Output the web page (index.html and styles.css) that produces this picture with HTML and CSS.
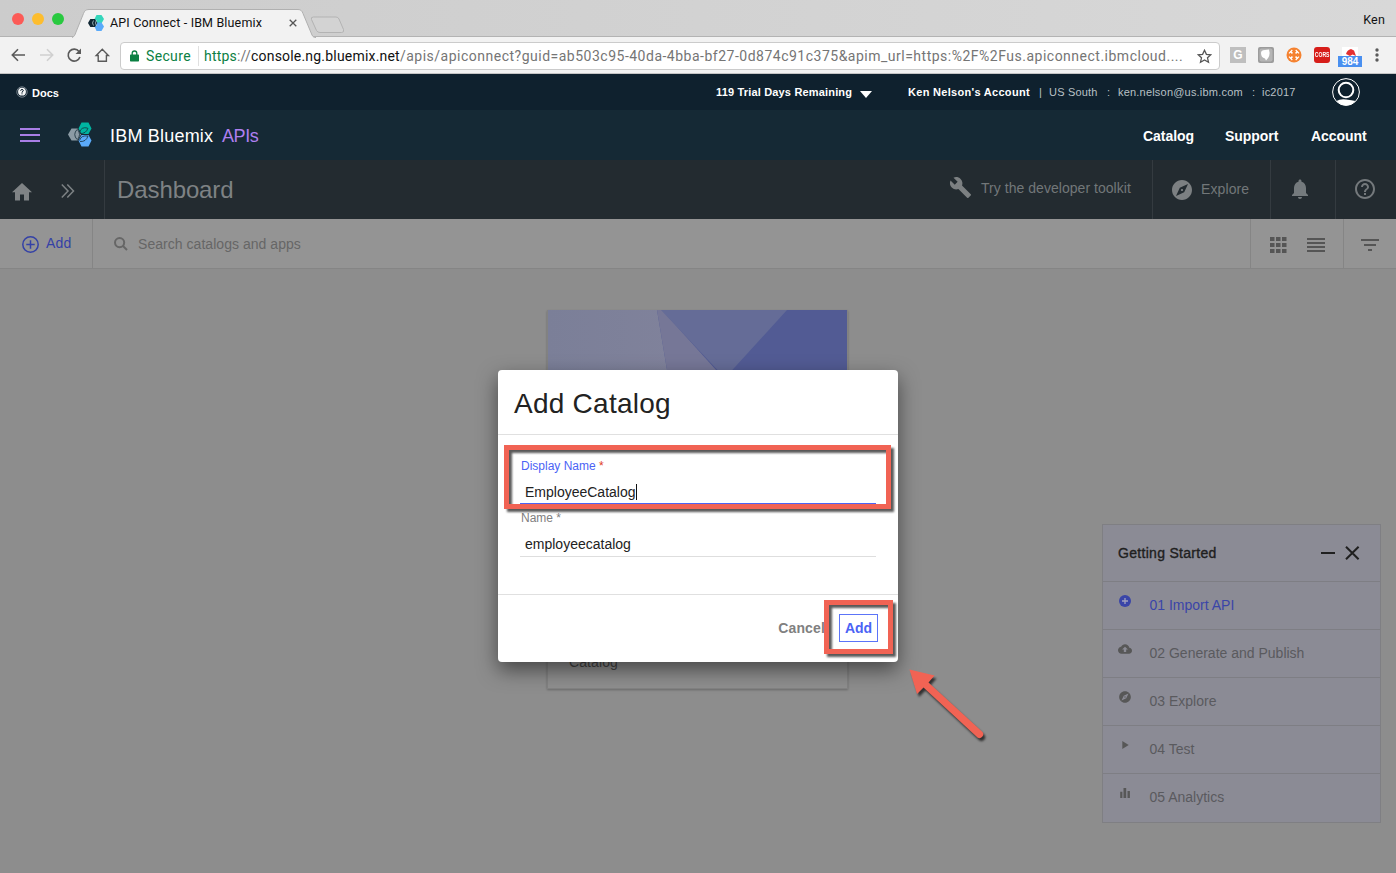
FILE: index.html
```html
<!DOCTYPE html>
<html lang="en">
<head>
<meta charset="utf-8">
<title>API Connect - IBM Bluemix</title>
<link rel="stylesheet" href="styles.css">
</head>
<body>
<svg class="defs" width="0" height="0">
  <symbol id="compass" viewBox="0 0 24 24"><path d="M12 10.9c-.61 0-1.1.49-1.1 1.1s.49 1.1 1.1 1.1c.61 0 1.1-.49 1.1-1.1s-.49-1.1-1.1-1.1zM12 2C6.48 2 2 6.48 2 12s4.48 10 10 10 10-4.48 10-10S17.52 2 12 2zm2.19 12.19L6 18l3.81-8.19L18 6l-3.81 8.190z"/></symbol>
</svg>
<div class="tabstrip">
  <div class="lights"><i class="red"></i><i class="amber"></i><i class="green"></i></div>
  <div class="tab">
    <svg class="tab-shape" width="280" height="29" viewBox="0 0 280 29"><path d="M0 28.500C2 28 3 26 4 23L11.500 4.500C12.500 2 13.500 .5 17 .5H226C229 .5 230 2 231 4.500L240 26C241 28 242 28.500 244 28.500V29H0Z" fill="#f2f2f2"/><path d="M0 28.500C2 28 3 26 4 23L11.500 4.500C12.500 2 13.500 .5 17 .5H226C229 .5 230 2 231 4.500L240 26C241 28 242 28.500 244 28.500" fill="none" stroke="#b0b0b0"/><path d="M241.500 8H264Q266 8 267 10L271.500 20.500Q272.500 23.500 269.500 23.500H248Q245.500 23.500 244.500 21.500L239.500 10.500Q238.500 8 241.500 8Z" fill="#d3d3d3" stroke="#b3b3b3"/></svg>
    <svg class="favicon" width="16" height="16" viewBox="0 0 16 16"><path d="M8.500 0H13.500L16 4 13.500 8.500H8.500L6.500 4Z" fill="#35d6bb"/><path d="M8.500 7.500H13.500L16 11.500 13.500 16H8.500L6.500 11.500Z" fill="#5aaafa"/><path d="M2.300 4H7L9.300 8 7 12H2.300L0 8Z" fill="#112734"/><path d="M5.500 5.500Q3.500 8 5.500 10.500M8.500 5Q6.500 8 8.500 11" stroke="#b5cad1" stroke-width=".8" fill="none"/></svg>
    <span class="tab-title">API Connect - IBM Bluemix</span>
    <svg class="tab-close" width="8" height="8" viewBox="0 0 8 8"><path d="M.7.700 7.300 7.300M7.300.700.7 7.300" stroke="#555" stroke-width="1.300"/></svg>
  </div>
  <span class="profile">Ken</span>
</div>
<div class="navbar">
  <svg class="nav-icons" width="112" height="36" viewBox="0 0 112 36" fill="none" stroke="#5a5a5a" stroke-width="1.600"><path d="M25 18H12.500M18 12.300 12.300 18 18 23.700"/><path d="M40 18H52.500M47 12.300 52.700 18 47 23.700" stroke="#d0d0d0"/><path d="M79 14.500A6 6 0 1 0 79.900 20"/><path d="M81 11.500V17H75.500Z" fill="#5a5a5a" stroke="none"/><path d="M98.200 24.200V18.500H96.200L102.300 12.300 108.400 18.500H106.400V24.200Z" stroke-width="1.400"/></svg>
  <div class="address">
    <svg class="lock" width="9" height="12" viewBox="0 0 9 12"><rect y="4.500" width="9" height="7" rx=".7" fill="#0b8043"/><path d="M2.200 5V3.300a2.300 2.300 0 0 1 4.600 0V5" fill="none" stroke="#0b8043" stroke-width="1.300"/></svg>
    <span class="secure">Secure</span>
    <span class="url"><b class="scheme">https</b>://<b class="host">console.ng.bluemix.net</b><b class="path">/apis/apiconnect?guid=ab503c95-40da-4bba-bf27-0d874c91c375&amp;apim_url=https:%2F%2Fus.apiconnect.ibmcloud....</b></span>
    <svg class="star" width="15" height="15" viewBox="0 0 15 15"><path d="M7.500 1.300 9.400 5.300 13.800 5.800 10.500 8.800 11.500 13.200 7.500 10.900 3.500 13.200 4.500 8.800 1.200 5.800 5.600 5.300Z" fill="none" stroke="#555" stroke-width="1.300"/></svg>
  </div>
  <div class="exts">
    <span class="ext ext-g">G</span>
    <svg class="ext" width="16" height="16" viewBox="0 0 16 16"><rect width="16" height="16" rx="2" fill="#9c9c9c"/><rect x="1.500" y="1.500" width="13" height="13" rx="2" fill="#b5b5b5"/><path d="M3 6Q3 3 7 3L11 2.500Q13 9 8 13.500L7 11.500Q3 10.500 3 6Z" fill="#fff"/></svg>
    <svg class="ext" width="16" height="16" viewBox="0 0 16 16"><circle cx="8" cy="8" r="7.500" fill="#f58230"/><path d="M4.500 4.500 11.500 11.500M11.500 4.500 4.500 11.500" stroke="#fff" stroke-width="1.700"/><path d="M3 6.300 6.300 3M9.700 3 13 6.300M3 9.700 6.300 13M9.700 13 13 9.700" stroke="#fff" stroke-width="1.200"/><circle cx="8" cy="8" r="2.200" fill="#f58230"/></svg>
    <span class="ext ext-cors"><em>CORS</em></span>
    <span class="ext ext-last"><svg width="16" height="16" viewBox="0 0 16 16"><rect width="16" height="16" fill="#fff"/><path d="M4 7Q5 3 9 2L12 3.500 14 9 10.500 7.500 8 9Z" fill="#e53030"/></svg><span class="count">984</span></span>
    <svg class="dots" width="4" height="16" viewBox="0 0 4 16" fill="#5a5a5a"><circle cx="2" cy="3" r="1.700"/><circle cx="2" cy="8" r="1.700"/><circle cx="2" cy="13" r="1.700"/></svg>
  </div>
</div>
<div class="acctbar">
  <svg class="docs-icon" width="12" height="12" viewBox="0 0 12 12"><circle cx="6" cy="6" r="5.200" fill="none" stroke="#8b969e" stroke-width=".8"/><circle cx="6" cy="5.700" r="3.900" fill="#f3f5f6"/><path d="M4.600 4.700Q4.700 3.500 6 3.500T7.400 4.700Q7.300 5.300 6 6V6.700M6 7.300V8.300" stroke="#0f212e" fill="none"/></svg>
  <strong class="docs">Docs</strong>
  <strong class="trial">119 Trial Days Remaining</strong>
  <svg class="caret" width="12" height="7" viewBox="0 0 12 7"><path d="M0 0H12L6 7Z" fill="#fff"/></svg>
  <strong class="owner">Ken Nelson's Account</strong>
  <span class="bar">|</span><span class="region">US South</span><span class="sep1">:</span><span class="mail">ken.nelson@us.ibm.com</span><span class="sep2">:</span><span class="org">ic2017</span>
  <svg class="avatar" width="28" height="28" viewBox="0 0 28 28" fill="none" stroke="#fff"><circle cx="14" cy="14" r="13.400" stroke-width="1"/><circle cx="14" cy="12" r="7.300" stroke-width="2"/><path d="M4.500 23Q8 20.800 14 21.500T23.500 23Q19 27.500 14 27.500T4.500 23Z" fill="#fff" stroke="none"/></svg>
</div>
<div class="brandbar">
  <div class="burger"><i></i><i></i><i></i></div>
  <svg class="logo" width="24" height="25" viewBox="0 0 24 25"><path d="M13.500 .5H20.500L23.500 6.500 20.500 12H13.500L10.500 6.500Z" fill="#00b4a0"/><path d="M13.500 13H20.500L23.500 18.500 20.500 24.500H13.500L10.500 18.500Z" fill="#5aaafa"/><path d="M3.500 6.500H9.500L13 12.500 9.500 18.500H3.500L0 12.500Z" fill="#8c9ba5"/><path d="M9 7.500Q4.500 12.500 9 17.500M9.500 7.500Q13.500 12.500 9.500 17.500M11.500 10.500Q13 4.500 19.500 6M12 11.500Q18 12 20 6M11.500 18.500Q13 13 20 14M12 19.500Q18 20 20 14" fill="none" stroke="#152f3b" stroke-width=".8"/></svg>
  <span class="brand">IBM Bluemix</span><span class="product">APIs</span>
  <strong class="m1">Catalog</strong><strong class="m2">Support</strong><strong class="m3">Account</strong>
</div>
<div class="titlebar">
  <div class="crumbs">
    <svg class="home" width="20" height="18" viewBox="0 0 20 18"><path d="M10 0 20 9.300H17V17.500H12V11.500H8V17.500H3V9.300H0Z" fill="#7f8385"/></svg>
    <svg class="chev" width="14" height="14" viewBox="0 0 14 14"><path d="M.8.600 7 7 .8 13.400M6.300.600 12.500 7 6.300 13.400" fill="none" stroke="#7d8284" stroke-width="1.500"/></svg>
  </div>
  <h1>Dashboard</h1>
  <div class="toolkit"><svg width="23" height="23" viewBox="0 0 24 24" fill="#7c8082"><path d="M22.700 19l-9.100-9.100c.9-2.300.4-5-1.500-6.900-2-2-5-2.400-7.400-1.300L9 6 6 9 1.600 4.700C.4 7.100.9 10.100 2.900 12.100c1.900 1.900 4.600 2.400 6.900 1.500l9.100 9.100c.4.400 1 .4 1.400 0l2.300-2.300c.5-.4.500-1.100.1-1.400z"/></svg><span>Try the developer toolkit</span></div>
  <div class="explore"><svg width="24" height="24" fill="#7c8082"><use href="#compass"/></svg><span>Explore</span></div>
  <div class="bell"><svg width="24" height="24" viewBox="0 0 24 24" fill="#747a7d"><path d="M12 22c1.100 0 2-.9 2-2h-4c0 1.100.890 2 2 2zm6-6v-5c0-3.070-1.640-5.640-4.500-6.320V4c0-.830-.670-1.500-1.500-1.500s-1.500.670-1.500 1.500v.680C7.630 5.360 6 7.920 6 11v5l-2 2v1h16v-1l-2-2z"/></svg></div>
  <div class="help"><svg width="24" height="24" viewBox="0 0 24 24" fill="#74797c"><path d="M11 18h2v-2h-2v2zm1-16C6.480 2 2 6.480 2 12s4.480 10 10 10 10-4.480 10-10S17.520 2 12 2zm0 18c-4.410 0-8-3.590-8-8s3.590-8 8-8 8 3.590 8 8-3.590 8-8 8zm0-14c-2.210 0-4 1.790-4 4h2c0-1.100.9-2 2-2s2 .9 2 2c0 2-3 1.750-3 5h2c0-2.250 3-2.500 3-5 0-2.210-1.790-4-4-4z"/></svg></div>
</div>
<div class="toolbar">
  <div class="tb-add"><svg width="17" height="17" viewBox="0 0 17 17" fill="none" stroke="#3441a6" stroke-width="1.500"><circle cx="8.500" cy="8.500" r="7.700"/><path d="M8.500 4.300V12.700M4.300 8.500H12.700"/></svg><span>Add</span></div>
  <div class="tb-search"><svg width="14" height="14" viewBox="0 0 14 14" fill="none" stroke="#666" stroke-width="2"><circle cx="5.600" cy="5.600" r="4.600"/><path d="M9 9 13 13"/></svg><span>Search catalogs and apps</span></div>
  <div class="tb-view">
    <svg width="17" height="16" viewBox="0 0 17 16" fill="#555"><path d="M0 0H4.500V4H0ZM6 0H10.500V4H6ZM12 0H16.500V4H12ZM0 6H4.500V10H0ZM6 6H10.500V10H6ZM12 6H16.500V10H12ZM0 12H4.500V16H0ZM6 12H10.500V16H6ZM12 12H16.500V16H12Z"/></svg>
    <svg width="18" height="14" viewBox="0 0 18 14" fill="#555"><path d="M0 0H18V2H0ZM0 4H18V6H0ZM0 8H18V10H0ZM0 12H18V14H0Z"/></svg>
  </div>
  <div class="tb-filter"><svg width="18" height="12" viewBox="0 0 18 12" fill="#555"><path d="M0 0H18V2H0ZM3 5H15V7H3ZM7 10H11V12H7Z"/></svg></div>
</div>
<main>
  <div class="card">
    <svg class="cover" width="299" height="120" viewBox="0 0 299 120"><defs><linearGradient id="left"><stop offset="0" stop-color="#7b7f98"/><stop offset="1" stop-color="#80829b"/></linearGradient></defs><path d="M0 0H300V120H0Z" fill="#525b94"/><path d="M0 0H109L129 120H0Z" fill="url(#left)"/><path d="M109 0H114L222 120H129Z" fill="#767797"/><path d="M113 0H239L177 68Z" fill="#656c97"/></svg>
    <span class="card-type">Catalog</span>
  </div>
  <section class="guide">
    <header><h2>Getting Started</h2><svg width="39" height="14" viewBox="0 0 39 14" fill="none" stroke="#202020" stroke-width="2"><path d="M0 7H14M25 .7 37.600 13.300M37.600.700 25 13.300"/></svg></header>
    <div class="step active"><svg width="14" height="14" viewBox="0 0 14 14"><circle cx="7" cy="7" r="6" fill="#3a45a8"/><path d="M7 4V10M4 7H10" stroke="#a3a3bd" stroke-width="1.300"/></svg><span>01 Import API</span></div>
    <div class="step"><svg width="14" height="14" viewBox="0 0 24 24" fill="#575757"><path d="M19.350 10.040C18.670 6.590 15.640 4 12 4 9.110 4 6.600 5.640 5.350 8.040 2.340 8.360 0 10.910 0 14c0 3.310 2.690 6 6 6h13c2.760 0 5-2.240 5-5 0-2.640-2.050-4.780-4.650-4.960zM14 13v4h-4v-4H7l5-5 5 5h-3z"/></svg><span>02 Generate and Publish</span></div>
    <div class="step"><svg width="14" height="14" fill="#575757"><use href="#compass"/></svg><span>03 Explore</span></div>
    <div class="step"><svg width="14" height="14" viewBox="0 0 14 14" fill="#575757"><path d="M4.300 3 10.700 7 4.300 11Z"/></svg><span>04 Test</span></div>
    <div class="step"><svg width="14" height="14" viewBox="0 0 14 14" fill="#575757"><path d="M2.200 5.700H4.400V12H2.200ZM5.500 2H8.200V12H5.500ZM9.500 5H11.900V12H9.500Z"/></svg><span>05 Analytics</span></div>
  </section>
</main>
<div class="dialog">
  <h2>Add Catalog</h2>
  <div class="fields">
    <label class="lbl focus">Display Name <em>*</em></label>
    <div class="input focus">EmployeeCatalog<i class="cursor"></i></div>
    <label class="lbl">Name *</label>
    <div class="input">employeecatalog</div>
  </div>
  <footer><span class="cancel">Cancel</span><span class="submit">Add</span></footer>
</div>
<div class="mark mark-field"></div>
<div class="mark mark-add"></div>
<svg class="arrow" width="90" height="84" viewBox="0 0 90 84"><path d="M3.500 3.500 28.500 9.500 22.500 16.500 76.500 66A3.800 3.800 0 0 1 71.500 71.500L17.500 21.500 11 28Z" fill="#f16354"/></svg>
</body>
</html>
```
FILE: styles.css
```css
* { box-sizing: border-box; }
body { margin: 0; width: 1396px; height: 873px; overflow: hidden; display: flex; flex-direction: column; position: relative; background: #8d8d8d; font: 14px "Liberation Sans", Arial, sans-serif; }
svg { display: block; flex: none; }
span, strong, label { white-space: nowrap; }
h1, h2 { margin: 0; font-weight: 400; }
.defs { position: absolute; }

/* browser frame */
.tabstrip { height: 37px; flex: none; display: flex; background: linear-gradient(90deg, #cccccc, #d8d8d8); border-bottom: 1px solid #b3b3b3; font-family: Roboto, sans-serif; color: #111; }
.lights { display: flex; gap: 8px; padding: 13px 0 0 12px; width: 72px; }
.lights i { width: 12px; height: 12px; border-radius: 50%; }
.red { background: #fc5b57; }
.amber { background: #fdbd2e; }
.green { background: #29c940; }
.tab { position: relative; width: 280px; height: 29px; margin-top: 9px; display: flex; }
.tab-shape { position: absolute; left: 0; top: 0; }
.favicon { position: relative; margin: 6px 6px 0 16px; }
.tab-title { position: relative; width: 179px; line-height: 28px; font-size: 12.500px; letter-spacing: .15px; }
.tab-close { position: relative; margin-top: 10px; }
.profile { margin-left: auto; padding-right: 11px; font-size: 12.500px; line-height: 40px; letter-spacing: .2px; }
.navbar { height: 37px; flex: none; display: flex; background: #f2f2f2; border-bottom: 1px solid #c4c4c4; font-family: Roboto, sans-serif; }
.nav-icons { margin-right: 8px; }
.address { width: 1100px; height: 28px; margin-top: 5px; border: 1px solid #cbcbcb; border-radius: 4px; background: #fff; display: flex; font-size: 14px; line-height: 26px; color: #757575; }
.lock { margin: 7px 0 0 9px; }
.secure { color: #0b8043; margin-left: 7px; width: 53px; border-right: 1px solid #e0e0e0; height: 20px; margin-top: 3px; line-height: 20px; letter-spacing: .35px; }
.url { margin-left: 5px; width: 993px; letter-spacing: .2px; }
.url b { font-weight: 400; }
.scheme { color: #0b8043; }
.host { color: #111; }
.path { letter-spacing: .5px; }
.star { margin-top: 6px; }
.exts { display: flex; padding: 10px 0 0 10px; }
.ext { width: 16px; height: 16px; margin-right: 12px; }
.ext-g { background: #bfbfbf; color: #fff; font: bold 12px/16px "Liberation Sans", sans-serif; text-align: center; }
.ext-cors { background: #d71e1a; border-radius: 3px; color: #fff; font: bold 7px/16px "Liberation Sans", sans-serif; text-align: center; display: flex; justify-content: center; }
.ext-cors em { font-style: normal; transform: scale(.72, 1.15); }
.ext-last { position: relative; }
.count { position: absolute; left: -4px; top: 9px; width: 24px; height: 11px; background: #4a90f0; color: #fff; font: bold 10px/12px "Liberation Sans", sans-serif; text-align: center; }
.dots { margin: 0 0 0 5px; }

/* account and brand rows */
.acctbar { height: 36px; flex: none; display: grid; grid-template-columns: 16px 16px 684px 144px 48px 131px 10px 58px 11px 134px 10px 69px 28px; background: #0f212e; color: #fff; font-size: 11px; line-height: 36px; }
.acctbar::before { content: ""; }
.docs-icon { margin-top: 12px; }
.docs { padding-top: 1px; }
.trial { letter-spacing: .17px; }
.caret { margin-top: 17px; }
.owner { letter-spacing: .3px; }
.bar, .region, .sep1, .mail, .sep2, .org { color: #b8c0c5; letter-spacing: .2px; }
.avatar { margin: 4px 0 0 1px; }
.brandbar { height: 50px; flex: none; display: grid; grid-template-columns: 20px 48px 42px 112px 921px 82px 86px 60px; background: #152935; color: #fff; line-height: 52px; }
.brandbar::before { content: ""; }
.burger { display: flex; flex-direction: column; gap: 4px; padding-top: 18px; width: 20px; }
.burger i { height: 2px; background: #a87ee6; }
.logo { margin-top: 12px; }
.brand, .product { font-size: 18px; letter-spacing: .2px; }
.product { color: #af7ff0; letter-spacing: -.4px; }
.m1, .m2, .m3 { font-size: 14px; line-height: 53px; letter-spacing: -.05px; }

/* title row */
.titlebar { height: 59px; flex: none; display: flex; background: #232b30; color: #727779; }
.crumbs { width: 105px; border-right: 1px solid #343b40; display: flex; }
.home { margin: 23px 29px 0 12px; }
.chev { margin-top: 24px; }
h1 { font-size: 24px; line-height: 60px; padding-left: 12px; color: #7e8284; letter-spacing: -.1px; }
.toolkit { margin-left: auto; width: 203px; display: flex; line-height: 56px; letter-spacing: .04px; }
.toolkit svg { margin: 16px 9px 0 0; }
.explore { width: 119px; display: flex; border-left: 1px solid #343b40; border-right: 1px solid #343b40; line-height: 59px; letter-spacing: .1px; }
.explore svg { margin: 18px 7px 0 17px; }
.bell { width: 65px; border-right: 1px solid #343b40; padding: 17px 0 0 17px; }
.help { width: 60px; padding: 17px 0 0 17px; }

/* search row */
.toolbar { height: 50px; flex: none; display: flex; background: #949494; border-bottom: 1px solid #858585; color: #666; line-height: 50px; }
.tb-add { width: 93px; border-right: 1px solid #858585; display: flex; color: #3441a6; line-height: 48px; }
.tb-add svg { margin: 17px 7px 0 22px; }
.tb-add span { letter-spacing: .2px; }
.tb-search { flex: 1; display: flex; }
.tb-search svg { margin: 18px 10px 0 21px; }
.tb-search span { letter-spacing: .04px; }
.tb-view { width: 94px; border: solid #858585; border-width: 0 1px; display: flex; gap: 20px; padding-left: 19px; }
.tb-view svg { margin-top: 18px; }
.tb-view svg + svg { margin-top: 19px; }
.tb-filter { width: 52px; padding: 20px 0 0 17px; }

/* canvas */
main { flex: 1; display: flex; justify-content: space-between; padding: 41px 15px 0 547px; }
.card { width: 301px; height: 379px; background: #8f8f8f; border: 1px solid #828282; border-top: 0; box-shadow: 0 1px 2px rgba(0,0,0,.25); display: flex; flex-direction: column; justify-content: space-between; }
.card-type { color: #444; padding: 0 0 18px 21px; letter-spacing: .1px; }
.guide { width: 279px; height: 299px; margin-top: 214px; border: 1px solid #7f7f83; background: #8b8b95; }
.guide header { height: 57px; display: flex; justify-content: space-between; padding: 0 20px 0 15px; line-height: 57px; color: #202020; border-bottom: 1px solid #7e7e84; }
.guide header svg { margin-top: 21px; }
.guide h2 { font-size: 14px; letter-spacing: .3px; -webkit-text-stroke: .35px #202020; }
.step { height: 48px; display: flex; gap: 17.500px; padding-left: 15px; line-height: 47px; color: #5a5a5e; border-bottom: 1px solid #7e7e84; }
.step:last-child { border-bottom: 0; }
.step svg { margin-top: 12px; }
.active { color: #3a45a8; }

/* dialog */
.dialog { position: absolute; left: 498px; top: 370px; width: 400px; height: 292px; background: #fff; border-radius: 4px; box-shadow: 0 8px 20px rgba(0,0,0,.5); display: flex; flex-direction: column; color: #222; }
.dialog h2 { height: 65px; padding-left: 16px; border-bottom: 1px solid #e0e0e0; font-size: 28px; line-height: 67px; letter-spacing: .25px; }
.fields { flex: 1; padding: 22px 22px 0; display: flex; flex-direction: column; }
.lbl { height: 19px; padding-left: 1px; font-size: 12px; line-height: 19px; color: #808080; }
.lbl.focus { color: #4b63f5; }
.lbl em { font-style: normal; color: #e03c1e; }
.input { height: 29px; margin-bottom: 4px; border-bottom: 1px solid #dedede; padding-left: 5px; line-height: 33px; display: flex; }
.input.focus { border-bottom: 2px solid #4b63f5; }
.cursor { width: 1px; height: 16px; margin-top: 8px; background: #111; }
.dialog footer { height: 68px; border-top: 1px solid #e0e0e0; display: flex; justify-content: flex-end; padding: 19px 20px 0; font-weight: 700; line-height: 28px; }
.cancel { color: #808080; margin-right: 14px; letter-spacing: .15px; }
.submit { width: 39px; height: 28px; border: 1px solid #5c74f8; color: #4b63f5; text-align: center; line-height: 27px; }

/* callouts */
.mark { position: absolute; border: 5px solid #f16354; filter: drop-shadow(3px 3px 1px rgba(0,0,0,.65)); }
.mark-field { left: 504px; top: 445px; width: 387px; height: 64px; }
.mark-add { left: 824px; top: 600px; width: 69px; height: 54px; }
.arrow { position: absolute; left: 906px; top: 666px; filter: drop-shadow(2px 3px 1px rgba(0,0,0,.65)); }
```
